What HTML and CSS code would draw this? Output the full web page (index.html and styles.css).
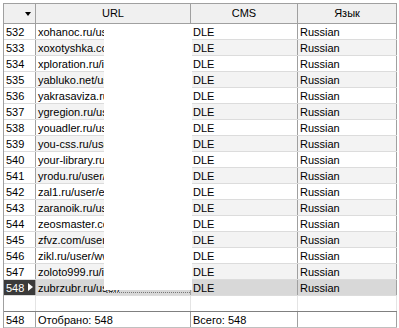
FILE: index.html
```html
<!DOCTYPE html>
<html>
<head>
<meta charset="utf-8">
<link rel="stylesheet" href="styles.css">
</head>
<body>
<div class="grid">
  <div class="row head">
    <div class="cell ind"><span class="sort"></span></div>
    <div class="cell c">URL</div>
    <div class="cell c">CMS</div>
    <div class="cell c">Язык</div>
  </div>
  <div class="row"><div class="cell ind">532</div><div class="cell">xohanoc.ru/user/</div><div class="cell">DLE</div><div class="cell">Russian</div></div>
  <div class="row alt"><div class="cell ind">533</div><div class="cell">xoxotyshka.com/</div><div class="cell">DLE</div><div class="cell">Russian</div></div>
  <div class="row"><div class="cell ind">534</div><div class="cell">xploration.ru/index</div><div class="cell">DLE</div><div class="cell">Russian</div></div>
  <div class="row alt"><div class="cell ind">535</div><div class="cell">yabluko.net/user/</div><div class="cell">DLE</div><div class="cell">Russian</div></div>
  <div class="row"><div class="cell ind">536</div><div class="cell">yakrasaviza.ru/user</div><div class="cell">DLE</div><div class="cell">Russian</div></div>
  <div class="row alt"><div class="cell ind">537</div><div class="cell">ygregion.ru/user/</div><div class="cell">DLE</div><div class="cell">Russian</div></div>
  <div class="row"><div class="cell ind">538</div><div class="cell">youadler.ru/user/</div><div class="cell">DLE</div><div class="cell">Russian</div></div>
  <div class="row alt"><div class="cell ind">539</div><div class="cell">you-css.ru/user/</div><div class="cell">DLE</div><div class="cell">Russian</div></div>
  <div class="row"><div class="cell ind">540</div><div class="cell">your-library.ru/user</div><div class="cell">DLE</div><div class="cell">Russian</div></div>
  <div class="row alt"><div class="cell ind">541</div><div class="cell">yrodu.ru/user/</div><div class="cell">DLE</div><div class="cell">Russian</div></div>
  <div class="row"><div class="cell ind">542</div><div class="cell">zal1.ru/user/edit</div><div class="cell">DLE</div><div class="cell">Russian</div></div>
  <div class="row alt"><div class="cell ind">543</div><div class="cell">zaranoik.ru/user/</div><div class="cell">DLE</div><div class="cell">Russian</div></div>
  <div class="row"><div class="cell ind">544</div><div class="cell">zeosmaster.com/</div><div class="cell">DLE</div><div class="cell">Russian</div></div>
  <div class="row alt"><div class="cell ind">545</div><div class="cell">zfvz.com/user/</div><div class="cell">DLE</div><div class="cell">Russian</div></div>
  <div class="row"><div class="cell ind">546</div><div class="cell">zikl.ru/user/www</div><div class="cell">DLE</div><div class="cell">Russian</div></div>
  <div class="row alt"><div class="cell ind">547</div><div class="cell">zoloto999.ru/index</div><div class="cell">DLE</div><div class="cell">Russian</div></div>
  <div class="row sel"><div class="cell ind">548<span class="mark"></span></div><div class="cell">zubrzubr.ru/user/</div><div class="cell">DLE</div><div class="cell">Russian</div></div>
  <div class="row empty"><div class="cell ind"></div><div class="cell"></div><div class="cell"></div><div class="cell"></div></div>
  <div class="row foot"><div class="cell ind">548</div><div class="cell">Отобрано: 548</div><div class="cell">Всего: 548</div><div class="cell"></div></div>
  <div class="mask"><span class="dots"></span></div>
</div>
</body>
</html>
```

FILE: styles.css
```css
html, body {
  margin: 0;
  background: #ffffff;
}
body {
  font-family: "Liberation Sans", Arial, sans-serif;
  font-size: 11px;
  color: #000;
}
.grid {
  position: relative;
  margin: 3px 0 0 3px;
  width: 394px;
  border-left: 1px solid #a0a0a0;
  border-top: 1px solid #a0a0a0;
  box-sizing: border-box;
}
.row {
  display: grid;
  grid-template-columns: 32px 155px 107px 99px;
  height: 16px;
  border-bottom: 1px solid #dcdcdc;
  box-sizing: border-box;
  background: #ffffff;
}
.row.alt { background: #f3f3f3; }
.cell {
  border-right: 1px solid #a0a0a0;
  padding: 1px 0 0 2px;
  line-height: 14px;
  white-space: nowrap;
  overflow: hidden;
  position: relative;
}
.row .ind { background: #ffffff; }
.head {
  height: 20px;
  background: #f0f0f0;
  border-bottom: 1px solid #a0a0a0;
}
.head .cell {
  line-height: 18px;
  padding: 0;
}
.head .ind { background: #f0f0f0; }
.head .c { text-align: center; }
.sort {
  position: absolute;
  right: 4px;
  top: 8px;
  width: 0;
  height: 0;
  border-left: 3px solid transparent;
  border-right: 3px solid transparent;
  border-top: 4px solid #000;
}
.sel { background: #d8d8d8; }
.sel .ind {
  background: #3a3a3a;
  color: #ffffff;
}
.mark {
  position: absolute;
  right: 2px;
  top: 3px;
  width: 0;
  height: 0;
  border-top: 4px solid transparent;
  border-bottom: 4px solid transparent;
  border-left: 5px solid #ffffff;
}
.empty {
  height: 15px;
  border-bottom: none;
}
.empty .cell { border-right-color: #e4e4e4; }
.foot {
  height: 17px;
  border-top: 1px solid #808080;
  border-bottom: 1px solid #c0c0c0;
}
.mask {
  position: absolute;
  left: 100px;
  top: 20px;
  width: 88px;
  height: 266px;
  background: #ffffff;
}
.dots {
  position: absolute;
  left: 2px;
  right: 2px;
  bottom: -3px;
  border-bottom: 1px dotted #777;
}
```
